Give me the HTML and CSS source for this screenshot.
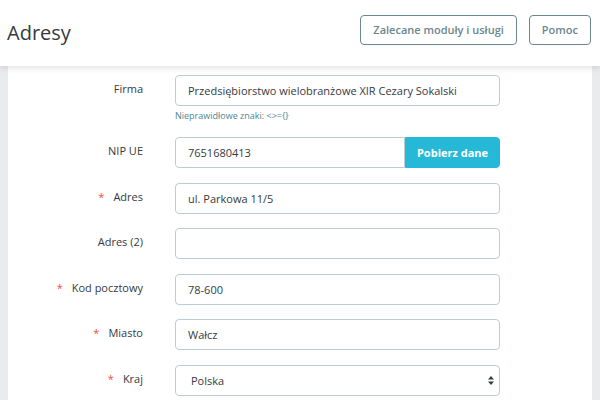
FILE: index.html
```html
<!DOCTYPE html>
<html lang="pl">

<head>
  <meta charset="UTF-8">
  <meta name="viewport" content="width=device-width, initial-scale=1.0">
  <title>Adresy</title>
  <link rel="stylesheet" href="styles.css">
</head>

<body>
  <header class="page-head">
    <h1 class="page-title">Adresy</h1>
    <div class="toolbar">
      <button class="btn-outline">Zalecane moduły i usługi</button>
      <button class="btn-outline">Pomoc</button>
    </div>
  </header>

  <main class="content">
    <form class="panel">
      <div class="form-row">
        <label class="form-label">Firma</label>
        <div class="field">
          <input class="form-input" type="text" value="Przedsiębiorstwo wielobranżowe XIR Cezary Sokalski">
          <div class="hint">Nieprawidłowe znaki: &lt;&gt;={}</div>
        </div>
      </div>

      <div class="form-row">
        <label class="form-label">NIP UE</label>
        <div class="field input-group">
          <input class="form-input" type="text" value="7651680413">
          <button type="button" class="btn-primary">Pobierz dane</button>
        </div>
      </div>

      <div class="form-row">
        <label class="form-label"><span class="req">*</span>Adres</label>
        <div class="field">
          <input class="form-input" type="text" value="ul. Parkowa 11/5">
        </div>
      </div>

      <div class="form-row">
        <label class="form-label">Adres (2)</label>
        <div class="field">
          <input class="form-input" type="text" value="">
        </div>
      </div>

      <div class="form-row">
        <label class="form-label"><span class="req">*</span>Kod pocztowy</label>
        <div class="field">
          <input class="form-input" type="text" value="78-600">
        </div>
      </div>

      <div class="form-row">
        <label class="form-label"><span class="req">*</span>Miasto</label>
        <div class="field">
          <input class="form-input" type="text" value="Wałcz">
        </div>
      </div>

      <div class="form-row">
        <label class="form-label"><span class="req">*</span>Kraj</label>
        <div class="field select-wrap">
          <select class="form-input form-select">
            <option>Polska</option>
          </select>
          <svg class="select-arrows" width="6" height="9" viewBox="0 0 6 9">
            <path d="M3 0 L6 3.4 H0 Z M3 9 L6 5.6 H0 Z" fill="#363a41"/>
          </svg>
        </div>
      </div>
    </form>
  </main>
</body>

</html>
```

FILE: styles.css
```css
* {
  margin: 0;
  padding: 0;
  box-sizing: border-box;
}

body {
  font-family: 'Open Sans', 'Noto Sans', sans-serif;
  color: #363a41;
  background: #eaebed;
  height: 400px;
  overflow: hidden;
}

/* Nagłówek strony */
.page-head {
  position: relative;
  z-index: 2;
  height: 66px;
  display: flex;
  align-items: center;
  justify-content: space-between;
  padding: 0 9px 0 7px;
  background: #fff;
  box-shadow: 0 2px 6px rgba(0, 0, 0, 0.12);
}

.page-title {
  font-size: 20px;
  font-weight: 400;
  color: #363a41;
  margin-top: -2px;
}

.toolbar {
  display: flex;
  gap: 12px;
  margin-top: -7px;
}

.btn-outline {
  height: 30px;
  padding: 0 12px;
  font-family: inherit;
  font-size: 11px;
  font-weight: 600;
  color: #6c868e;
  background: #fff;
  border: 1px solid #6c868e;
  border-radius: 4px;
}

/* Formularz */
.content {
  padding: 0 8px;
}

.panel {
  background: #fff;
  padding-top: 9px;
  height: 334px;
}

.form-row {
  display: grid;
  grid-template-columns: 135px 325px;
  column-gap: 32px;
  margin-bottom: 14.5px;
}

.form-label {
  height: 28px;
  line-height: 28px;
  font-size: 11px;
  text-align: right;
  color: #363a41;
}

.req {
  color: #f54c3e;
  margin-right: 9px;
}

.form-input {
  width: 100%;
  height: 31px;
  padding: 0 12px;
  font-family: inherit;
  font-size: 11px;
  color: #363a41;
  background: #fff;
  border: 1px solid #bbcdd2;
  border-radius: 4px;
  outline: none;
}

.hint {
  margin-top: 3px;
  font-size: 9px;
  line-height: 13.5px;
  color: #4f8794;
}

.input-group {
  display: flex;
}

.input-group .form-input {
  width: 230px;
  border-radius: 4px 0 0 4px;
}

.btn-primary {
  width: 95px;
  height: 31px;
  font-family: inherit;
  font-size: 11px;
  font-weight: 700;
  color: #fff;
  background: #25b9d7;
  border: 1px solid #25b9d7;
  border-radius: 0 4px 4px 0;
}

.select-wrap {
  position: relative;
}

.form-select {
  appearance: none;
  -webkit-appearance: none;
  padding-left: 15px;
}

.select-arrows {
  position: absolute;
  right: 6px;
  top: 11px;
}
```
